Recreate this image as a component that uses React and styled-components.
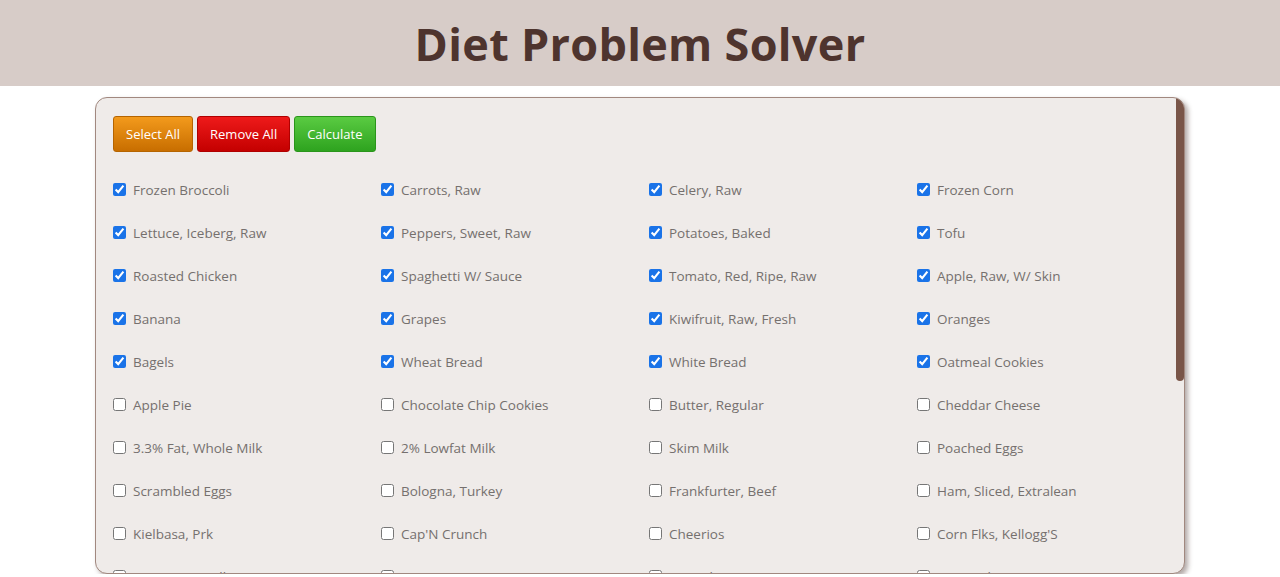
import React, { useState, useRef, useEffect } from 'react';
import styled, { createGlobalStyle } from 'styled-components';

const GlobalStyle = createGlobalStyle`
  html, body {
    margin: 0;
    padding: 0;
    background: #fff;
    font-family: "Open Sans", "Liberation Sans", sans-serif;
  }
`;

const Header = styled.header`
  height: 86px;
  background: #d7ccc8;
  display: flex;
  align-items: center;
  justify-content: center;
`;

const Title = styled.h1`
  margin: 0;
  font-size: 45px;
  font-weight: 700;
  color: #4e342e;
  letter-spacing: 0.3px;
`;

const PanelFrame = styled.div`
  position: relative;
  box-sizing: border-box;
  width: 1090px;
  height: 477px;
  margin: 11px auto 0;
  background: #efebe9;
  border: 1px solid #a1887f;
  border-radius: 12px;
  box-shadow: 3px 3px 5px rgba(62, 39, 35, 0.4);
  overflow: hidden;
`;

const Panel = styled.main`
  box-sizing: border-box;
  height: 100%;
  overflow-y: scroll;
  padding: 18px 0 40px 17px;
  scrollbar-width: none;

  &::-webkit-scrollbar {
    display: none;
  }
`;

// custom scrollbar thumb drawn over the panel's right edge
const ScrollThumb = styled.div`
  position: absolute;
  right: 0;
  width: 8px;
  background: #795548;
  border-radius: 0 4px 4px 4px;
  pointer-events: none;
`;

const Toolbar = styled.div`
  display: flex;
  gap: 4px;
  margin-bottom: 16px;
`;

const palette = {
  orange: ['#f39a1c', '#c86e00', '#b56400'],
  red: ['#ee1a1a', '#c40000', '#b00000'],
  green: ['#5acb42', '#2ea31f', '#2a951b'],
};

const Button = styled.button`
  height: 36px;
  padding: 0 12px;
  border: 1px solid ${(p) => palette[p.$tone][2]};
  border-radius: 3px;
  background: linear-gradient(${(p) => palette[p.$tone][0]}, ${(p) => palette[p.$tone][1]});
  color: #fff;
  font-family: "Open Sans", "Liberation Sans", sans-serif;
  font-size: 13px;
  cursor: pointer;
`;

const Grid = styled.div`
  display: grid;
  grid-template-columns: repeat(4, 268px);
`;

const Item = styled.label`
  height: 43px;
  display: flex;
  align-items: center;
  gap: 7px;
  font-size: 13.5px;
  color: #75706e;
  cursor: pointer;
`;

const Box = styled.input`
  width: 13px;
  height: 13px;
  margin: 0;
  accent-color: #1a73e8;
`;

const foods = [
  'Frozen Broccoli', 'Carrots, Raw', 'Celery, Raw', 'Frozen Corn',
  'Lettuce, Iceberg, Raw', 'Peppers, Sweet, Raw', 'Potatoes, Baked', 'Tofu',
  'Roasted Chicken', 'Spaghetti W/ Sauce', 'Tomato, Red, Ripe, Raw', 'Apple, Raw, W/ Skin',
  'Banana', 'Grapes', 'Kiwifruit, Raw, Fresh', 'Oranges',
  'Bagels', 'Wheat Bread', 'White Bread', 'Oatmeal Cookies',
  'Apple Pie', 'Chocolate Chip Cookies', 'Butter, Regular', 'Cheddar Cheese',
  '3.3% Fat, Whole Milk', '2% Lowfat Milk', 'Skim Milk', 'Poached Eggs',
  'Scrambled Eggs', 'Bologna, Turkey', 'Frankfurter, Beef', 'Ham, Sliced, Extralean',
  'Kielbasa, Prk', "Cap'N Crunch", 'Cheerios', "Corn Flks, Kellogg'S",
  "Raisin Brn, Kellg'S", 'Rice Krispies', 'Special K', 'Oatmeal',
  'Malt-O-Meal, Choc', 'Pizza W/ Pepperoni', 'Taco', 'Hamburger W/ Toppings',
  'Hotdog, Plain', 'Couscous', 'White Rice', 'Macaroni, Ckd',
  'Peanut Butter', 'Pork', 'Sardines In Oil', 'White Tuna In Water',
  'Popcorn, Air-Popped', 'Potato Chips, Bbqflvr', 'Pretzels', 'Tortilla Chip',
  'Chicknoodl Soup', 'Splt Pea&Hamsoup', 'Vegetbeef Soup', 'Neweng Clamchwd',
  'Tomato Soup', 'New E Clamchwd, W/Mlk', 'Crm Mshrm Soup, W/Mlk', 'Beanbacn Soup, W/Watr',
];

export default function App() {
  const [checked, setChecked] = useState(() => foods.map((_, i) => i < 20));
  const [thumb, setThumb] = useState({ top: 0, height: 283 });
  const panelRef = useRef(null);

  const updateThumb = () => {
    const el = panelRef.current;
    if (!el) return;
    const track = el.clientHeight;
    const height = (track / el.scrollHeight) * track;
    const top = (el.scrollTop / (el.scrollHeight - track || 1)) * (track - height);
    setThumb({ top, height });
  };

  useEffect(updateThumb, []);

  const toggle = (i) =>
    setChecked((prev) => prev.map((v, j) => (j === i ? !v : v)));

  return (
    <>
      <GlobalStyle />
      <Header>
        <Title>Diet Problem Solver</Title>
      </Header>
      <PanelFrame>
        <Panel ref={panelRef} onScroll={updateThumb}>
          <Toolbar>
            <Button $tone="orange" onClick={() => setChecked(foods.map(() => true))}>Select All</Button>
            <Button $tone="red" onClick={() => setChecked(foods.map(() => false))}>Remove All</Button>
            <Button $tone="green">Calculate</Button>
          </Toolbar>
          <Grid>
            {foods.map((food, i) => (
              <Item key={food}>
                <Box type="checkbox" checked={checked[i]} onChange={() => toggle(i)} />
                {food}
              </Item>
            ))}
          </Grid>
        </Panel>
        <ScrollThumb style={{ top: thumb.top, height: thumb.height }} />
      </PanelFrame>
    </>
  );
}
